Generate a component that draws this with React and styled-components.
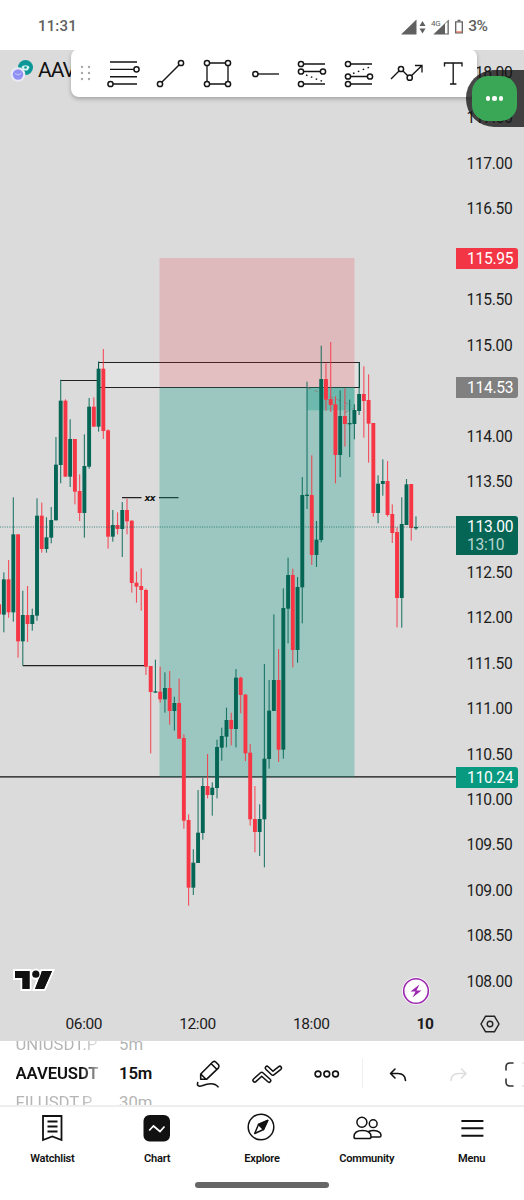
import React from 'react';
import styled, { createGlobalStyle } from 'styled-components';

const GlobalStyle = createGlobalStyle`
  * { box-sizing: border-box; }
  body { margin: 0; background: #fff; font-family: Roboto, "Liberation Sans", sans-serif; color: #111; }
`;

const Screen = styled.div`
  width: 524px;
  height: 1200px;
  display: flex;
  flex-direction: column;
  overflow: hidden;
  background: #fff;
`;

const StatusBar = styled.header`
  height: 50px;
  flex: none;
  display: flex;
  justify-content: space-between;
  align-items: flex-start;
  padding: 16px 36.5px 0 38px;
  color: #606060;
  font-size: 15px;
  font-weight: 500;
  line-height: 21px;
`;

const Clock = styled.span`
  letter-spacing: 0.15px;
`;

const StatusIcons = styled.div`
  display: flex;
  align-items: center;
  gap: 4px;
  font-size: 15.5px;
  letter-spacing: -0.5px;
`;

const ChartPanel = styled.main`
  position: relative;
  height: 991px;
  flex: none;
  background: #dbdbdb;
  display: grid;
  grid-template-columns: 456px 68px;
  grid-template-rows: 956px 35px;
  overflow: hidden;
`;

const Plot = styled.svg`
  display: block;
`;

const PriceScale = styled.div`
  position: relative;
  display: flex;
  flex-direction: column;
  padding-top: 1px;
  overflow: hidden;
`;

const PriceLabel = styled.div`
  flex: none;
  height: 45.45px;
  line-height: 45.45px;
  padding-left: 10.5px;
  font-size: 15.6px;
  letter-spacing: -0.35px;
  color: #1c1c1c;
`;

const PriceTag = styled.div`
  position: absolute;
  left: 0;
  top: ${p => p.$top}px;
  width: 62px;
  padding: 2px 0 0 11px;
  border-radius: 0 3px 3px 0;
  background: ${p => p.$color};
  color: #fff;
  font-size: 15.6px;
  letter-spacing: -0.3px;
  line-height: 19px;
`;

const Countdown = styled.div`
  line-height: 17px;
  height: 18px;
  color: #b8d6cf;
`;

const TimeScale = styled.div`
  display: flex;
  padding-left: 27px;
`;

const TimeLabel = styled.span`
  flex: none;
  width: 113.7px;
  text-align: center;
  font-size: 15.5px;
  line-height: 36px;
  letter-spacing: -0.4px;
  font-weight: ${p => (p.$bold ? 700 : 400)};
  color: #1c1c1c;
`;

const AxisSettings = styled.div`
  display: flex;
  align-items: center;
  padding-left: 24px;
`;

const SymbolLegend = styled.div`
  position: absolute;
  left: 10px;
  top: 7px;
  display: flex;
  align-items: center;
  gap: 4px;
  font-size: 21px;
  line-height: 27px;
  letter-spacing: -1px;
`;

const Brand = styled.svg`
  position: absolute;
  left: 10px;
  top: 916px;
`;

const FlashBadge = styled.svg`
  position: absolute;
  left: 401px;
  top: 926px;
`;

const DrawingBar = styled.div`
  position: absolute;
  left: 71px;
  top: -1px;
  width: 406px;
  height: 48px;
  border-radius: 8px;
  background: #fff;
  box-shadow: 0 2px 4px rgba(0, 0, 0, 0.25);
  display: flex;
  align-items: center;
  padding: 0 0 3px 8px;
`;

const GripIcon = styled.svg`
  flex: none;
  margin: 2px 14px 0 0;
`;

const Tool = styled.svg`
  flex: none;
  width: 36px;
  height: 36px;
  margin-right: 11px;
  overflow: visible;
  fill: none;
  stroke: #151515;
  stroke-width: 1.35;
  circle { fill: #fff; stroke-width: 1.5; }
`;

const AssistDock = styled.div`
  position: absolute;
  right: 0;
  top: 20px;
  width: 58px;
  height: 57px;
  border-radius: 28px 0 0 28px;
  background: rgba(20, 20, 20, 0.78);
  padding: 6px;
`;

const AssistButton = styled.div`
  width: 45px;
  height: 45px;
  border-radius: 16px;
  background: #3aa757;
  display: flex;
  align-items: center;
  justify-content: center;
  gap: 2.4px;
`;

const Dot = styled.i`
  width: 4.2px;
  height: 4.2px;
  border-radius: 50%;
  background: #fff;
`;

const ActionBar = styled.section`
  height: 66px;
  flex: none;
  display: flex;
  border-bottom: 2px solid #eee;
  overflow: hidden;
`;

const Wheel = styled.div`
  flex: none;
  width: ${p => p.$width}px;
  margin-left: ${p => p.$offset}px;
  display: flex;
  flex-direction: column;
  justify-content: center;
  white-space: nowrap;
  overflow: hidden;
  mask-image: ${p => (p.$fade ? 'linear-gradient(to right, #000 80%, rgba(0,0,0,.3) 100%)' : 'none')};
`;

const WheelItem = styled.div`
  flex: none;
  height: 29px;
  line-height: 29px;
  font-size: 16.7px;
  font-weight: ${p => (p.$active ? 600 : 400)};
  letter-spacing: ${p => (p.$active ? '-0.1px' : '0')};
  color: ${p => (p.$active ? '#111' : '#b5b5b5')};
`;

const ActionIcons = styled.svg`
  flex: none;
  display: block;
`;

const NavBar = styled.nav`
  height: 93px;
  flex: none;
  display: flex;
  position: relative;
`;

const NavItem = styled.div`
  width: 104.8px;
  display: flex;
  flex-direction: column;
  align-items: center;
  padding-top: 6px;
  gap: 9px;
  font-size: 11.1px;
  font-weight: 600;
  line-height: 15px;
  letter-spacing: -0.25px;
  svg { fill: none; stroke: #111; stroke-width: 1.5; }
`;

const HomeIndicator = styled.div`
  position: absolute;
  left: 195px;
  top: 75px;
  width: 134px;
  height: 5.6px;
  border-radius: 3px;
  background: #666;
`;

// [index, rising, high, bodyTop, bodyBottom, low], in thirds of a pixel below each group's origin
const groups = [
  { origin: 330, rows: [
    [-1,0,823,823,853,853],[0,1,727,748,854,907],[1,0,690,748,847,863],[2,1,502,613,847,875],[3,0,613,613,934,983],
    [4,1,782,855,934,1006],[5,0,768,855,882,936],[6,1,836,855,882,902],[7,1,505,557,857,872],[8,0,518,557,657,668],
    [9,1,562,622,657,668],[10,1,531,570,623,640],[11,1,321,404,571,571],[12,1,149,212,405,460],[13,0,208,212,440,440],
    [14,1,268,327,440,471],[15,0,327,327,485,523],[16,0,433,483,549,573],[17,1,313,408,549,623],[18,1,204,230,410,416],
    [19,0,202,230,290,290],[20,1,94,116,290,305],[21,0,57,116,303,327],[22,0,298,301,620,656],[23,1,540,585,620,635],
    [24,0,547,585,597,613],[25,1,516,540,597,681],[26,0,506,540,574,613],[27,0,571,572,759,788],[28,0,725,758,770,818],
    [29,0,715,768,780,842],[30,0,776,780,1010,1035],
  ] },
  { origin: 480, rows: [
    [31,0,558,558,636,820],[32,1,539,634,638,638],[33,0,560,635,658,668],[34,1,577,624,658,698],[35,0,573,624,693,734],
    [36,1,650,669,693,752],[37,0,596,669,776,776],[38,0,763,774,1022,1046],[39,0,1003,1020,1223,1277],[40,1,1108,1148,1223,1245],
    [41,1,930,1058,1149,1149],[42,1,894,918,1059,1079],[43,0,822,918,945,955],[44,1,907,923,945,1007],[45,1,779,801,924,955],
    [46,1,743,768,803,842],[47,1,683,720,770,802],[48,0,698,720,747,796],[49,1,567,593,747,802],[50,0,590,593,645,700],
    [51,0,642,644,820,843],[52,0,792,818,1018,1037],[53,0,918,1017,1056,1117],[54,1,973,1017,1056,1128],[55,1,552,836,1018,1162],
  ] },
  { origin: 540, rows: [
    [56,1,420,512,657,686],[57,1,223,420,513,513],[58,0,327,420,629,666],[59,1,145,204,629,656],[60,1,53,105,206,310],
    [61,0,86,105,330,382],[62,1,111,141,330,368],
  ] },
  { origin: 330, rows: [
    [63,1,441,495,772,880],[64,1,155,494,498,537],[65,0,376,495,675,705],[66,1,573,629,675,711],[67,1,47,147,630,637],
    [68,0,100,147,209,242],[69,0,36,207,225,246],[70,0,199,223,375,460],[71,1,181,258,375,441],[72,0,175,258,282,350],
    [73,1,209,279,283,381],[74,1,223,240,282,328],[75,1,97,192,243,255],[76,0,109,192,213,323],[77,0,133,210,281,398],
    [78,0,279,279,549,560],[79,1,436,461,549,580],[80,1,388,453,462,497],[81,0,393,453,555,560],[82,0,523,552,609,639],
    [83,0,592,606,804,892],[84,1,502,582,804,893],[85,1,447,463,585,585],[86,0,462,462,594,632],[87,1,559,591,595,600],
  ] },
];

const candles = groups.flatMap(({ origin, rows }) =>
  rows.map(([i, up, ...ys]) => {
    const [high, top, bottom, low] = ys.map(v => origin + v / 3);
    return { x: 3.85 + 4.737 * i, color: up ? '#056656' : '#f73645', high, top, bottom, low };
  })
);

const Candle = ({ x, color, high, top, bottom, low }) => (
  <g fill={color}>
    <rect x={x - 0.55} y={high} width="1.1" height={low - high} opacity="0.85" />
    <rect x={x - 1.95} y={top} width="3.9" height={bottom - top} />
  </g>
);

const PriceChart = () => (
  <Plot width="456" height="956" viewBox="0 50 456 956">
    <rect x="98.5" y="362.5" width="261" height="25" fill="#fff" fillOpacity="0.2" stroke="#222" strokeWidth="1" />
    <path d="M60.5 380.5H98M22.7 665.6H146M122 497.6h19.5M159 497.6h19.5" stroke="#222" strokeWidth="1.1" />
    <path d="M0 776.9H456" stroke="#111" strokeWidth="1.3" />
    <rect x="159.5" y="258" width="195" height="129.3" fill="#f23645" fillOpacity="0.2" />
    <rect x="159.5" y="387.3" width="195" height="389.7" fill="#089981" fillOpacity="0.3" />
    <rect x="307" y="387.3" width="47.5" height="23" fill="#089981" fillOpacity="0.3" />
    <path d="M307 387.5L352 405.500M345 412.500L354.500 408" stroke="#878787" strokeDasharray="4 4" fill="none" />
    <text x="144.5" y="501" fontFamily="DejaVu Sans" fontStyle="italic" fontWeight="700" fontSize="9" fill="#111" textLength="11">xx</text>
    {candles.map(c => <Candle key={c.x} {...c} />)}
    <path d="M0 527H456" stroke="#056656" strokeWidth="1" strokeDasharray="1 1.35" opacity="0.75" />
  </Plot>
);

// Round prices that sit under a price tag leave their slot on the scale empty
const covered = ['116.00', '114.50', '113.00'];
const prices = Array.from({ length: 21 }, (_, i) => (118 - i * 0.5).toFixed(2));

const tools = [
  <><path d="M4 8h27M4 15.300h24M4 22.700h27M6 30h25" /><circle cx="30.5" cy="15.300" r="2.6" /><circle cx="4.5" cy="30" r="2.6" /></>,
  <><path d="M7 30L28 9" /><circle cx="7" cy="30" r="2.6" /><circle cx="28" cy="9" r="2.6" /></>,
  <><path d="M7 9h21v21H7z" /><circle cx="7" cy="9" r="2.6" /><circle cx="28" cy="9" r="2.6" /><circle cx="7" cy="30" r="2.6" /><circle cx="28" cy="30" r="2.6" /></>,
  <><path d="M8 20h24" /><circle cx="8.4" cy="20" r="2.6" /></>,
  <><path d="M6 10h25M6 17.500h21M6 30h25" /><path d="M12 21l18 7" strokeDasharray="1.6 3.6" /><circle cx="7" cy="10" r="2.6" /><circle cx="7" cy="17.500" r="2.6" /><circle cx="29" cy="17.500" r="2.6" /><circle cx="7" cy="30" r="2.6" /></>,
  <><path d="M6 10h25M6 22.500h21M6 30h25" /><path d="M12 19.500l18-7" strokeDasharray="1.6 3.6" /><circle cx="7" cy="10" r="2.6" /><circle cx="7" cy="22.500" r="2.6" /><circle cx="29" cy="22.500" r="2.6" /><circle cx="7" cy="30" r="2.6" /></>,
  <><path d="M3 25l10-10 8.5 8.5L34 11.5M27 11.5h7v7" /><circle cx="13" cy="15" r="2.6" /><circle cx="21.7" cy="23.7" r="2.6" /></>,
  <path d="M9.500 12.500V9h17.500v3.500M18.200 9v21M15 30h6.400" />,
];

const navItems = [
  { label: 'Watchlist', icon: <><path d="M5 3h18.500v24l-9.200-3.500L5 27z" strokeWidth="1.8" /><path d="M9.500 8.500h10M9.500 13.500h10M9.500 18.500h10" strokeWidth="1.8" /></> },
  { label: 'Chart', icon: <><rect x="0.500" y="2" width="26.500" height="26.500" rx="6" fill="#111" stroke="none" /><path d="M6.200 17.500l4.300-4.500 6.500 5.500 4.500-5" stroke="#fff" strokeWidth="1.7" /></> },
  { label: 'Explore', icon: <g strokeLinejoin="round"><circle cx="13" cy="14" r="12.800" /><path d="M19.700 7.500L10.500 11.500 6.700 20.500 15.500 16.500z" /><path d="M19.700 7.500L10.500 11.500 15.500 16.500z" fill="#111" /></g> },
  { label: 'Community', icon: <><circle cx="8.900" cy="9.300" r="5" /><circle cx="20.200" cy="10.700" r="3.900" /><path d="M1 23.700c0-4 3-6.300 8.500-6.300s8.500 2.300 8.500 6.300q0 1.900-1.800 1.900H2.800Q1 25.600 1 23.700zM15.500 18.500c6-2.500 12.500-.2 12.500 4 0 .9-.4 1.500-1.500 1.500H18" /></> },
  { label: 'Menu', icon: <path d="M3.400 8h22M3.400 15.300h22M3.400 22.700h22" strokeWidth="2.1" /> },
];

export default function App() {
  return (
    <>
      <GlobalStyle />
      <Screen>
        <StatusBar>
          <Clock>11:31</Clock>
          <StatusIcons>
            <svg width="63" height="18" viewBox="0 0 63 18" fill="#606060">
              <path d="M0 16.500L15.500 1.500V16.500zM18.500 8l3-5 3 5zM18.500 10.500l3 5 3-5z" />
              <path d="M32.300 16.500L47.800 1.500V16.500zM44 6v9.500h2.500V3.500z" fillRule="evenodd" />
              <text x="30" y="8" fontSize="8" fontWeight="400" letterSpacing="-0.3">4G</text>
              <path d="M54.700 3.800h6.600v11h-6.600zM56.500 2.300h3" fill="none" stroke="#606060" strokeWidth="1.300" />
              <path d="M55.200 13.900h5.600" stroke="#ec7256" strokeWidth="1.200" />
            </svg>
            <span>3%</span>
          </StatusIcons>
        </StatusBar>

        <ChartPanel>
          <PriceChart />
          <PriceScale>
            {prices.map(p => <PriceLabel key={p}>{covered.includes(p) ? null : p}</PriceLabel>)}
            <PriceTag $top={198} $color="#f23645">115.95</PriceTag>
            <PriceTag $top={327} $color="#808080">114.53</PriceTag>
            <PriceTag $top={466} $color="#056656">113.00<Countdown>13:10</Countdown></PriceTag>
            <PriceTag $top={717} $color="#089981">110.24</PriceTag>
          </PriceScale>
          <TimeScale>
            <TimeLabel>06:00</TimeLabel>
            <TimeLabel>12:00</TimeLabel>
            <TimeLabel>18:00</TimeLabel>
            <TimeLabel $bold>10</TimeLabel>
          </TimeScale>
          <AxisSettings>
            <svg width="20" height="20" viewBox="0 0 20 20" fill="none" stroke="#222" strokeWidth="1.400">
              <path d="M5.500 2.300h9L19 10l-4.500 7.700h-9L1 10z" /><circle cx="10" cy="10" r="2.800" />
            </svg>
          </AxisSettings>
          <SymbolLegend>
            <svg width="24" height="26" viewBox="0 0 24 26">
              <circle cx="15.500" cy="9.500" r="7.500" fill="#0b9797" /><path d="M11.500 9.500c1-3 7-3 8 0l-2 3h-4z" fill="#d8f3f3" />
              <circle cx="15.500" cy="9.500" r="1.300" fill="#0b9797" />
              <circle cx="8" cy="16.500" r="7.300" fill="#e9eaf5" /><circle cx="8" cy="16.500" r="5.200" fill="#9191f3" />
              <path d="M5 15.500q3 3 6 0" stroke="#c5c5ff" fill="none" />
            </svg>
            AAVE
          </SymbolLegend>
          <Brand width="46" height="28" viewBox="0 0 46 28">
            <path d="M5 5h14.500v18h-7v-11H5zM32 5h10l-8 18H25z" fill="#111" stroke="#fff" strokeWidth="4" paintOrder="stroke" />
            <circle cx="25.800" cy="8.200" r="3.600" fill="#111" stroke="#fff" strokeWidth="4" paintOrder="stroke" />
            <path d="M5 5h14.500v18h-7v-11H5zM32 5h10l-8 18H25z" fill="#111" />
          </Brand>
          <FlashBadge width="30" height="30" viewBox="0 0 30 30">
            <circle cx="15" cy="15" r="13.800" fill="#fff" /><circle cx="15" cy="15" r="12.300" fill="#fff" stroke="#9c27b0" strokeWidth="1.600" />
            <path d="M18.500 8.500L9.500 15.500h5l-3 6 9-7h-5z" fill="#9c27b0" />
          </FlashBadge>
          <DrawingBar>
            <GripIcon width="13" height="18" viewBox="0 0 13 18" fill="#a8a8a8">
              {[2, 9].flatMap(x => [3, 9, 15].map(y => <circle key={`${x}-${y}`} cx={x + 1} cy={y} r="1.200" />))}
            </GripIcon>
            {tools.map((t, i) => <Tool key={i} viewBox="0 0 36 36">{t}</Tool>)}
          </DrawingBar>
          <AssistDock><AssistButton><Dot /><Dot /><Dot /></AssistButton></AssistDock>
        </ChartPanel>

        <ActionBar>
          <Wheel $width={83} $offset={15.5} $fade>
            <WheelItem>UNIUSDT.P</WheelItem><WheelItem $active>AAVEUSDT</WheelItem><WheelItem>FILUSDT.P</WheelItem>
          </Wheel>
          <Wheel $width={50} $offset={20.5}>
            <WheelItem>5m</WheelItem><WheelItem $active>15m</WheelItem><WheelItem>30m</WheelItem>
          </Wheel>
          <ActionIcons width="355" height="64" viewBox="169 1041 355 64" fill="none" stroke="#111" strokeWidth="1.600" strokeLinejoin="round" strokeLinecap="round">
            <path d="M200.700 1079.300v-5.300l12-12q1.500-1.200 3 0l2.800 2.800q1.200 1.500 0 3l-12 11.500zM211 1063.500l6 6M201 1074.200l5 5" />
            <path d="M197.700 1082.500c-1 3 .8 4.500 4.300 3.300 5-2 12-4 16 1" />
            {['M254.700 1080.300L261.700 1074 269 1080.500', 'M267 1068L272.800 1073.500 279.800 1068'].map(d => (
              <g key={d}><path d={d} strokeWidth="5" /><path d={d} stroke="#fff" strokeWidth="1.900" /></g>
            ))}
            <circle cx="318" cy="1074" r="2.900" /><circle cx="326.800" cy="1074" r="2.900" /><circle cx="335.500" cy="1074" r="2.900" />
            <path d="M362.500 1059v29" stroke="#eee" strokeWidth="1" />
            <path d="M395 1069l-4.500 4.500 4.500 4.500M391 1073.500h7q7 0 7.500 7" />
            <path d="M461.500 1069l4.500 4.500-4.500 4.500M465.500 1073.500h-7q-7 0-7.500 7" stroke="#ddd" />
            <path d="M513 1063h-3q-4 0-4 4v3M506 1079v3q0 4 4 4h3" stroke="#333" />
            <path d="M522.500 1063h1.500M522.500 1086h1.500" stroke="#e4e4e4" />
          </ActionIcons>
        </ActionBar>

        <NavBar>
          {navItems.map(n => (
            <NavItem key={n.label}><svg width="28" height="29" viewBox="0 0 28 29" overflow="visible">{n.icon}</svg>{n.label}</NavItem>
          ))}
          <HomeIndicator />
        </NavBar>
      </Screen>
    </>
  );
}
